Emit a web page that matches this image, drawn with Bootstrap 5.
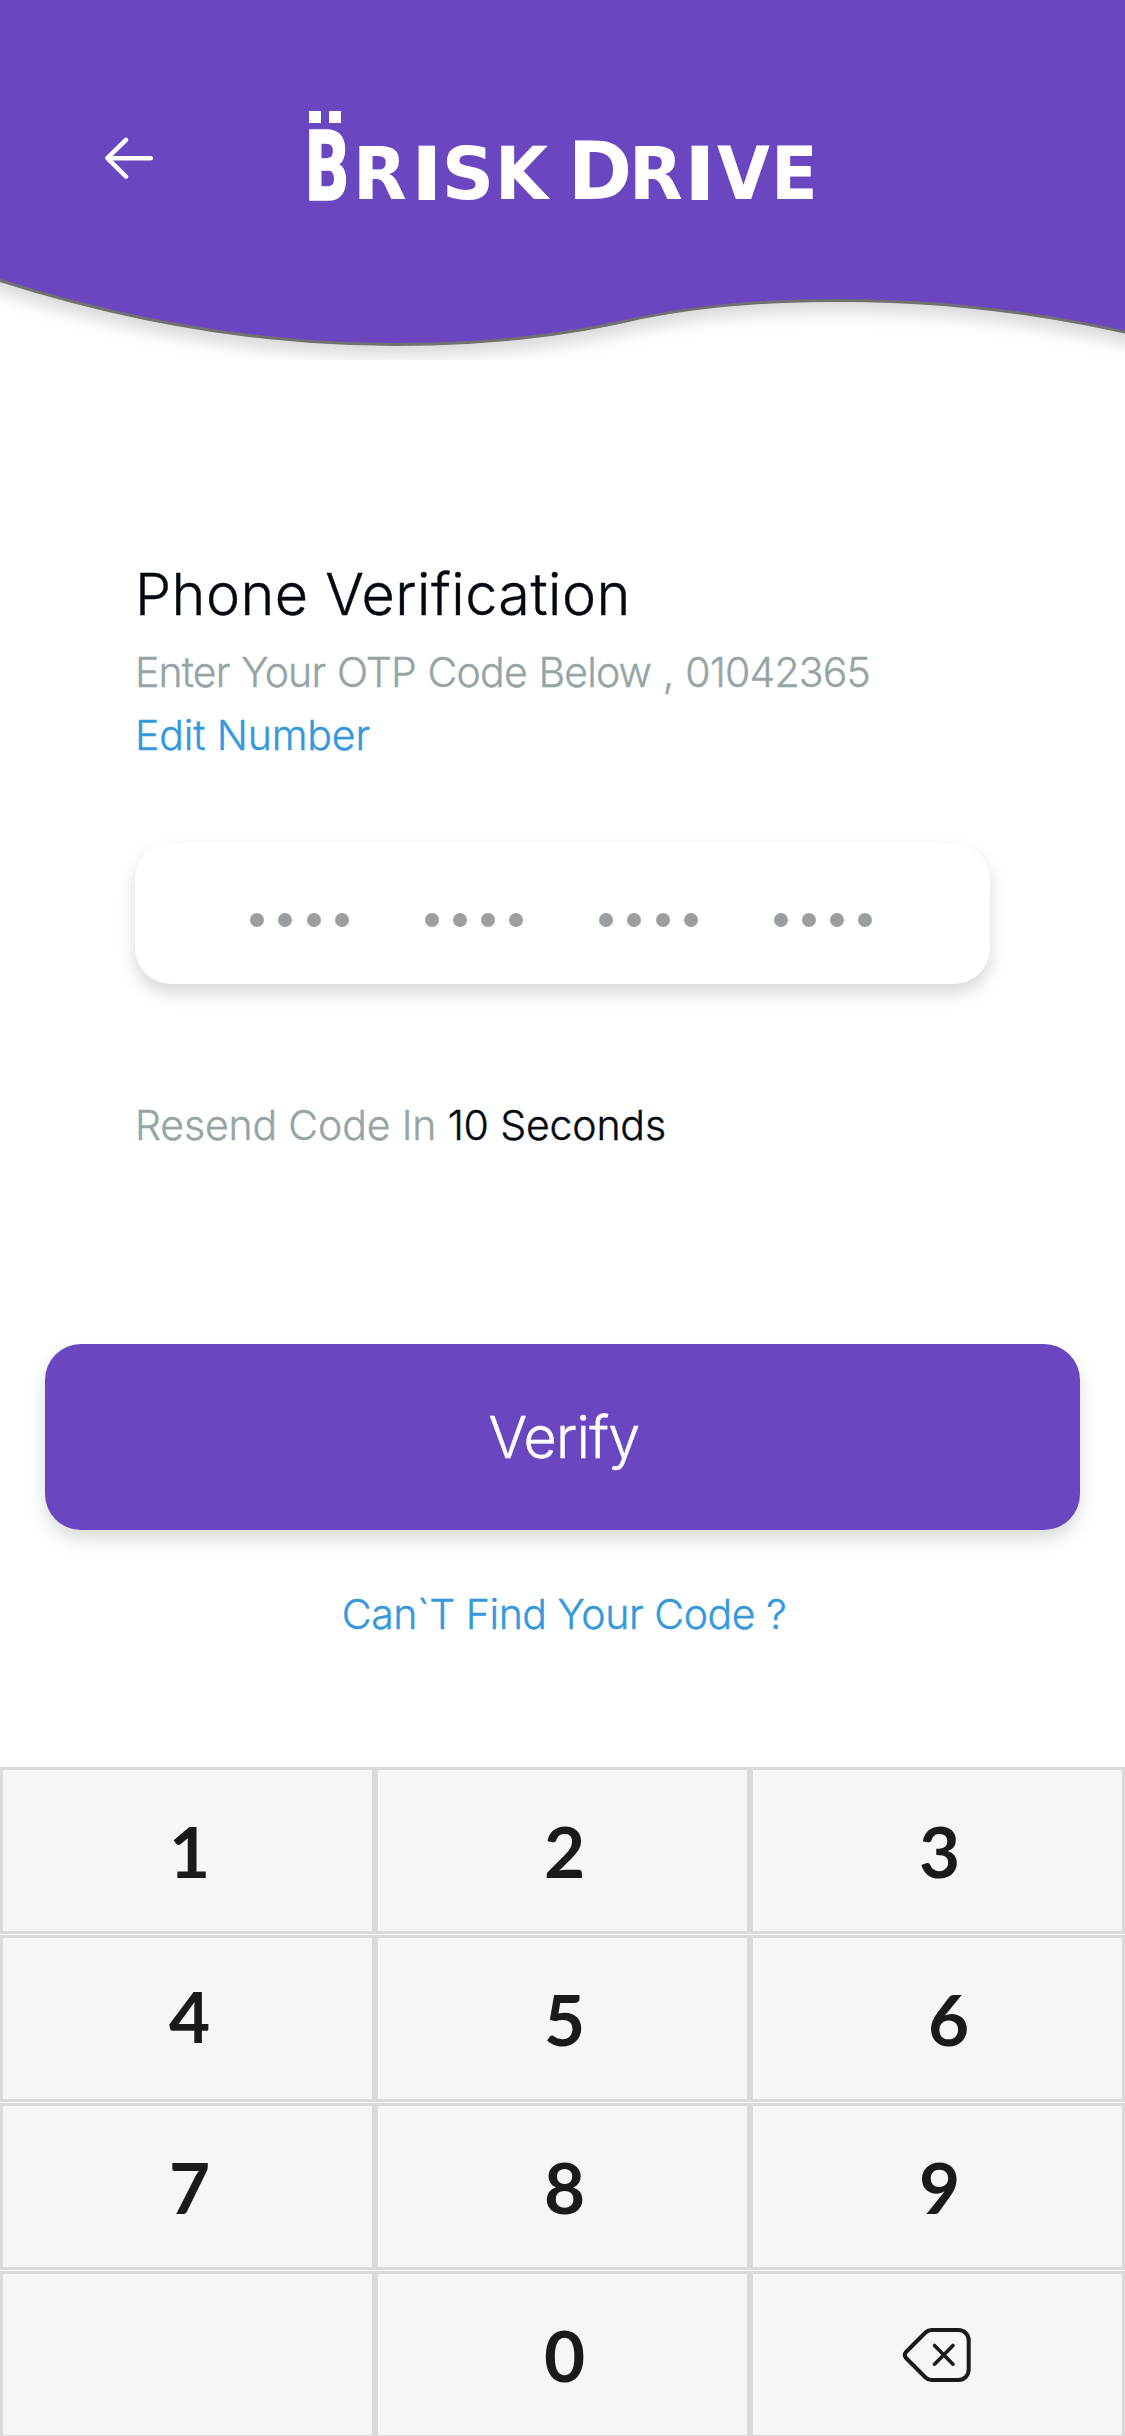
<!DOCTYPE html>
<html lang="en">
<head>
<meta charset="utf-8">
<meta name="viewport" content="width=device-width, initial-scale=1">
<title>Brisk Drive – Phone Verification</title>
<link href="https://cdn.jsdelivr.net/npm/bootstrap@5.3.0/dist/css/bootstrap.min.css" rel="stylesheet">
<style>
  body { font-family: Inter, "Open Sans", sans-serif; font-weight: 300; color: #020911; background: #fff; }
  .screen { width: 1125px; height: 2436px; }
  .hero { height: 360px; padding: 69px 0 0 102px; }
  .hero-wave { inset: 0; z-index: 0; }
  .back-btn { width: 54px; height: 54px; margin-top: 62px; }
  .brand { margin-left: 140px; }
  .otp { padding: 192px 135px 0; }
  .title-lg { font-size: 57.5px; font-weight: 300; line-height: 84px; letter-spacing: .48px; -webkit-text-stroke: .4px currentColor; }
  .line-md { font-size: 41px; line-height: 63px; -webkit-text-stroke: .4px currentColor; }
  .otp-hint { letter-spacing: -.85px; word-spacing: 1px; margin-top: 5px; }
  .edit-link { letter-spacing: -.15px; }
  .tint-dark { color: #020911; }
  .tint-muted { color: #95a5a6; }
  .tint-link { color: #3498db; }
  .code-box { height: 141px; border-radius: 36px; margin-top: 76px; padding: 13px 0 0 115px; gap: 76px; box-shadow: 0 9px 18px rgba(0,0,0,.16); }
  .code-group { width: 99px; margin-right: -.5px; }
  .code-dot { width: 14px; height: 14px; background: #9b9fa2; }
  .resend { margin-top: 110px; letter-spacing: -.16px; }
  .verify { height: 186px; margin: 187px 45px 0; border-radius: 36px; background: #6b46c1; font-size: 57.5px; font-weight: 300; letter-spacing: -.8px; padding: 0 0 0 3px; color: #fff; -webkit-text-stroke: .4px currentColor; box-shadow: 0 9px 18px rgba(44,62,60,.18); }
  .help { margin-top: 53px; letter-spacing: -.45px; padding-left: 3px; }
  .keypad { height: 669px; overflow: hidden; display: grid; grid-template-columns: repeat(3, 375px); grid-auto-rows: 167px; row-gap: 1px; }
  .key { border: 3px solid #dbdad9; background: #f6f6f6; border-radius: 0; color: #1a1a1a; font: 700 71px/1 Lato, "Open Sans", sans-serif; padding: 0 0 0 4px; }
  .key-raised { padding-bottom: 6px; }
  .key-shifted { padding-left: 22px; }
  .key-icon { padding: 0 2px 0 0; }
</style>
</head>
<body>
<main class="screen d-flex flex-column overflow-hidden">
  <header class="hero position-relative overflow-hidden d-flex align-items-start flex-shrink-0">
    <svg class="hero-wave position-absolute" width="1125" height="360" viewBox="0 0 1125 360" aria-hidden="true">
      <defs><filter id="ws" x="-5%" y="-5%" width="110%" height="120%"><feDropShadow dx="0" dy="9" stdDeviation="9" flood-color="#000" flood-opacity=".16"/></filter></defs>
      <path filter="url(#ws)" fill="#6b46c1" stroke="#707070" stroke-width="3" d="M-40 268L0 280.5C140 325 270 344.5 395 344.5C475 344.5 545 338.5 617 323C690 306 760 300.5 839 300.5C930 300.5 1030 311 1125 332L1170 343V-40H-40Z"/>
    </svg>
    <a href="#" class="back-btn position-relative" aria-label="Back">
      <svg class="d-block" width="54" height="54" viewBox="102 131 54 54" fill="none" stroke="#fff" stroke-width="4.5" stroke-linecap="round" stroke-linejoin="round"><path d="M150.800 158.200H107.500M126 139.800L107.300 158.200L126 176.600"/></svg>
    </a>
    <svg class="brand position-relative" width="536" height="176" viewBox="296 69 536 176" fill="#fff" role="img" aria-label="Brisk Drive">
      <path d="M309 111h12v12h-12zM329 111h12v12h-12z"/>
      <text transform="translate(306.300 200.300) scale(.66 1)" font-family="Roboto" font-weight="900" font-size="98.500" stroke="#fff" stroke-width="1.600">B</text>
      <g font-family="DejaVu Sans" font-weight="700" font-size="72.700">
        <text transform="translate(352.900 198.800) scale(.96 1)">R</text>
        <text transform="translate(413 198.500) scale(1.05 1)" stroke="#fff" stroke-width="2.200" font-size="71">I</text>
        <text x="441.700" y="198.800">S</text>
        <text transform="translate(495 198.800) scale(.94 1)">K</text>
        <text transform="translate(568 198.800) scale(.97 1)" font-size="79.600">D</text>
        <text transform="translate(629 198.800) scale(.96 1)">R</text>
        <text transform="translate(686 198.500) scale(1.05 1)" stroke="#fff" stroke-width="2.200" font-size="71">I</text>
        <text transform="translate(717 198.800) scale(.94 1)">V</text>
        <text transform="translate(770.900 198.800) scale(.94 1)">E</text>
      </g>
    </svg>
  </header>

  <section class="otp">
    <h1 class="title-lg m-0">Phone Verification</h1>
    <div class="otp-hint line-md tint-muted">Enter Your OTP Code Below , 01042365</div>
    <a href="#" class="edit-link line-md tint-link d-block text-decoration-none">Edit Number</a>
    <div class="code-box bg-white d-flex align-items-center">
      <div class="code-group d-flex justify-content-between"><i class="code-dot rounded-circle"></i><i class="code-dot rounded-circle"></i><i class="code-dot rounded-circle"></i><i class="code-dot rounded-circle"></i></div>
      <div class="code-group d-flex justify-content-between"><i class="code-dot rounded-circle"></i><i class="code-dot rounded-circle"></i><i class="code-dot rounded-circle"></i><i class="code-dot rounded-circle"></i></div>
      <div class="code-group d-flex justify-content-between"><i class="code-dot rounded-circle"></i><i class="code-dot rounded-circle"></i><i class="code-dot rounded-circle"></i><i class="code-dot rounded-circle"></i></div>
      <div class="code-group d-flex justify-content-between"><i class="code-dot rounded-circle"></i><i class="code-dot rounded-circle"></i><i class="code-dot rounded-circle"></i><i class="code-dot rounded-circle"></i></div>
    </div>
    <p class="resend line-md tint-muted mb-0">Resend Code In <span class="tint-dark">10 Seconds</span></p>
  </section>

  <button type="button" class="verify btn flex-shrink-0">Verify</button>
  <a href="#" class="help line-md tint-link text-center text-decoration-none">Can`T Find Your Code ?</a>

  <div class="keypad mt-auto flex-shrink-0">
    <button class="key btn">1</button><button class="key btn">2</button><button class="key btn">3</button>
    <button class="key key-raised btn">4</button><button class="key btn">5</button><button class="key key-shifted btn">6</button>
    <button class="key btn">7</button><button class="key btn">8</button><button class="key btn">9</button>
    <button class="key btn" aria-label="Blank"></button><button class="key btn">0</button>
    <button class="key key-icon btn" aria-label="Delete">
      <svg class="d-block mx-auto" width="70" height="56" viewBox="902 2327 70 56" fill="none" stroke="#1a1a1a" stroke-width="4" stroke-linecap="round" stroke-linejoin="round"><path d="M932 2330H958.500A10.200 10.200 0 0 1 968.700 2340.200V2369.800A10.200 10.200 0 0 1 958.500 2380H932A9 9 0 0 1 925.500 2377.500L906 2358Q903.500 2355 906 2352L925.500 2332.500A9 9 0 0 1 932 2330Z"/><path stroke-width="3.600" d="M934.500 2345.500L953 2364.200M953 2345.500L934.500 2364.200"/></svg>
    </button>
  </div>
</main>
<script src="https://cdn.jsdelivr.net/npm/bootstrap@5.3.0/dist/js/bootstrap.bundle.min.js"></script>
</body>
</html>
